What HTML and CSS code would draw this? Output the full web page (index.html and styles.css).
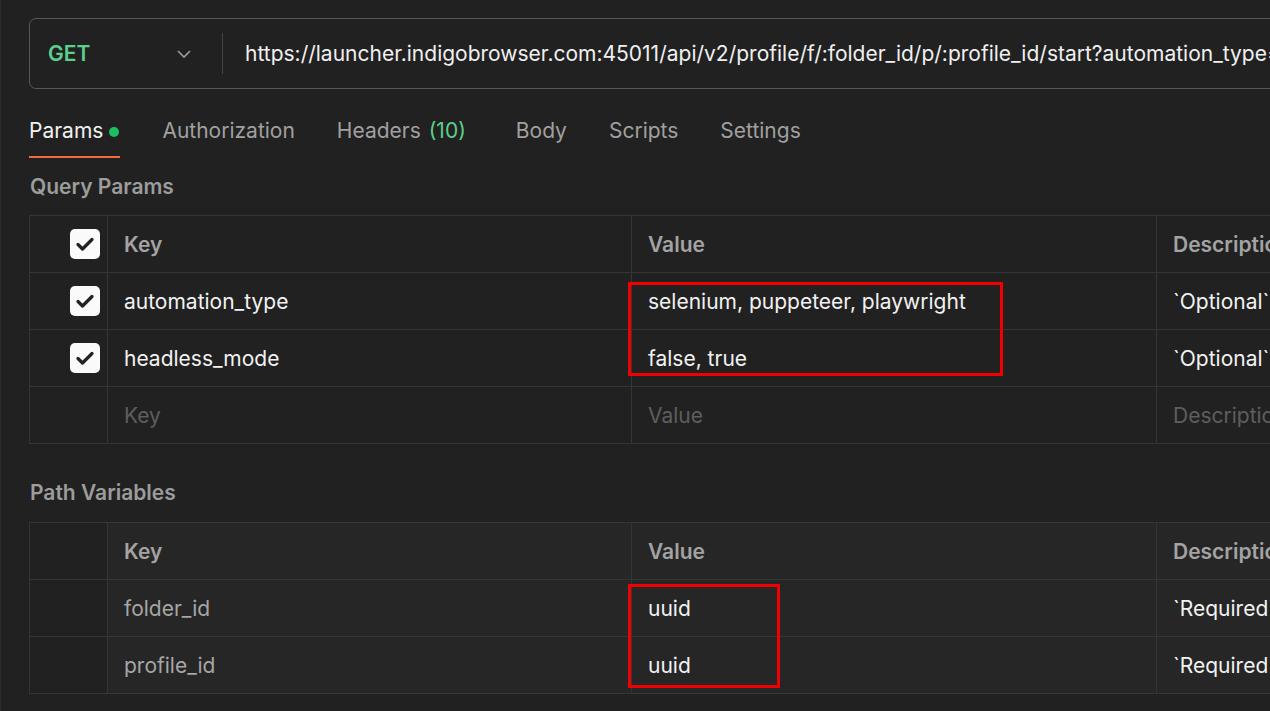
FILE: index.html
```html
<!DOCTYPE html>
<html lang="en">
<head>
    <meta charset="UTF-8">
    <title>GET profile start</title>
    <link rel="stylesheet" href="styles.css">
</head>
<body>
<div class="page">

    <div class="urlbar">
        <div class="method">
            <span class="get">GET</span>
            <svg class="chevron" width="16" height="10" viewBox="0 0 16 10"><path d="M2 2l6 6 6-6" fill="none" stroke="#9a9a9a" stroke-width="1.6"/></svg>
        </div>
        <div class="url">https://launcher.indigobrowser.com:45011/api/v2/profile/f/:folder_id/p/:profile_id/start?automation_type=selenium&amp;headless_mode=false</div>
    </div>

    <div class="tabs">
        <div class="tab active">Params <span class="dot"></span></div>
        <div class="tab">Authorization</div>
        <div class="tab">Headers <span class="count">(10)</span></div>
        <div class="tab">Body</div>
        <div class="tab">Scripts</div>
        <div class="tab">Settings</div>
    </div>

    <h2 class="section">Query Params</h2>
    <div class="table">
        <div class="cell chk"><span class="box"></span></div>
        <div class="cell head">Key</div>
        <div class="cell head">Value</div>
        <div class="cell head">Description</div>

        <div class="cell chk"><span class="box"></span></div>
        <div class="cell">automation_type</div>
        <div class="cell">selenium, puppeteer, playwright</div>
        <div class="cell">`Optional` automation type</div>

        <div class="cell chk"><span class="box"></span></div>
        <div class="cell">headless_mode</div>
        <div class="cell">false, true</div>
        <div class="cell">`Optional` headless mode</div>

        <div class="cell chk"></div>
        <div class="cell ph">Key</div>
        <div class="cell ph">Value</div>
        <div class="cell ph">Description</div>

        <div class="mark mark-query"></div>
    </div>

    <h2 class="section path">Path Variables</h2>
    <div class="table readonly">
        <div class="cell chk"></div>
        <div class="cell head">Key</div>
        <div class="cell head">Value</div>
        <div class="cell head">Description</div>

        <div class="cell chk"></div>
        <div class="cell dim">folder_id</div>
        <div class="cell">uuid</div>
        <div class="cell">`Required` folder id</div>

        <div class="cell chk"></div>
        <div class="cell dim">profile_id</div>
        <div class="cell">uuid</div>
        <div class="cell">`Required` profile id</div>

        <div class="mark mark-path"></div>
    </div>

</div>
</body>
</html>
```

FILE: styles.css
```css
html, body {
    margin: 0;
    background: #212121;
    overflow: hidden;
}
body {
    font-family: Inter, "Noto Sans", sans-serif;
    color: #f2f2f2;
    width: 1270px;
    height: 711px;
    border-left: 1px solid #2c2c2c;
    box-sizing: border-box;
}
.page {
    padding: 18px 0 0 28px;
}
.urlbar {
    display: flex;
    align-items: center;
    width: 1320px;
    height: 71px;
    border: 1px solid #575757;
    border-radius: 7px;
    box-sizing: border-box;
}
.method {
    display: flex;
    flex-shrink: 0;
    align-items: center;
    justify-content: space-between;
    width: 193px;
    height: 41px;
    padding: 0 30px 0 18px;
    box-sizing: border-box;
    border-right: 1px solid #444;
}
.get {
    color: #5ccf8c;
    font-size: 21px;
    font-weight: 600;
}
.chevron {
    margin-top: 1px;
}
.url {
    padding-left: 22px;
    font-size: 21px;
    white-space: nowrap;
    color: #f0f0f0;
}
.tabs {
    display: flex;
    gap: 42px;
    margin-top: 21px;
    height: 48px;
}
.tab {
    font-size: 21px;
    color: #a0a0a0;
    padding-top: 8px;
    box-sizing: border-box;
    white-space: nowrap;
}
.tab.active {
    color: #f2f2f2;
    border-bottom: 2px solid #f26b3a;
    display: flex;
    gap: 6px;
    align-items: flex-start;
    padding-right: 1px;
}
.dot {
    width: 10px;
    height: 10px;
    background: #1dbf5f;
    border-radius: 50%;
    margin-top: 9px;
}
.count {
    color: #5ccf8c;
    margin-left: 2px;
}
.tab:nth-child(3) {
    margin-right: 8px;
}
.section {
    margin: 0;
    padding: 16px 0 0 1px;
    height: 57px;
    box-sizing: border-box;
    font-size: 21px;
    font-weight: 600;
    color: #9c9c9c;
}
.section.path {
    padding-top: 36px;
    height: 78px;
}
.table {
    position: relative;
    display: grid;
    grid-template-columns: 78px 524px 525px 240px;
    grid-auto-rows: 57px;
    border-top: 1px solid #353535;
    border-left: 1px solid #353535;
    width: max-content;
}
.cell {
    display: flex;
    align-items: center;
    padding: 0 0 0 16px;
    border-right: 1px solid #353535;
    border-bottom: 1px solid #353535;
    font-size: 21px;
    white-space: nowrap;
    overflow: hidden;
}
.cell.chk {
    justify-content: flex-end;
    padding: 0 7px 0 0;
}
.box {
    display: block;
    width: 30px;
    height: 30px;
    border-radius: 5px;
    background: #fafafa url("data:image/svg+xml,%3Csvg xmlns='http://www.w3.org/2000/svg' viewBox='0 0 30 30'%3E%3Cpath d='M8 15.5l4.5 4.5 9.5-9.5' fill='none' stroke='%23222' stroke-width='3.2' stroke-linecap='round' stroke-linejoin='round'/%3E%3C/svg%3E") center/100% no-repeat;
}
.head {
    font-weight: 600;
    color: #a3a3a3;
}
.ph {
    color: #5e5e5e;
}
.dim {
    color: #a6a6a6;
}
.readonly .cell {
    background: #262626;
}
.readonly .cell.chk {
    background: #212121;
}
.mark {
    position: absolute;
    border: 3px solid #f00000;
}
.mark-query {
    left: 598px;
    top: 66px;
    width: 369px;
    height: 88px;
}
.mark-path {
    left: 598px;
    top: 61px;
    width: 146px;
    height: 98px;
}
```
